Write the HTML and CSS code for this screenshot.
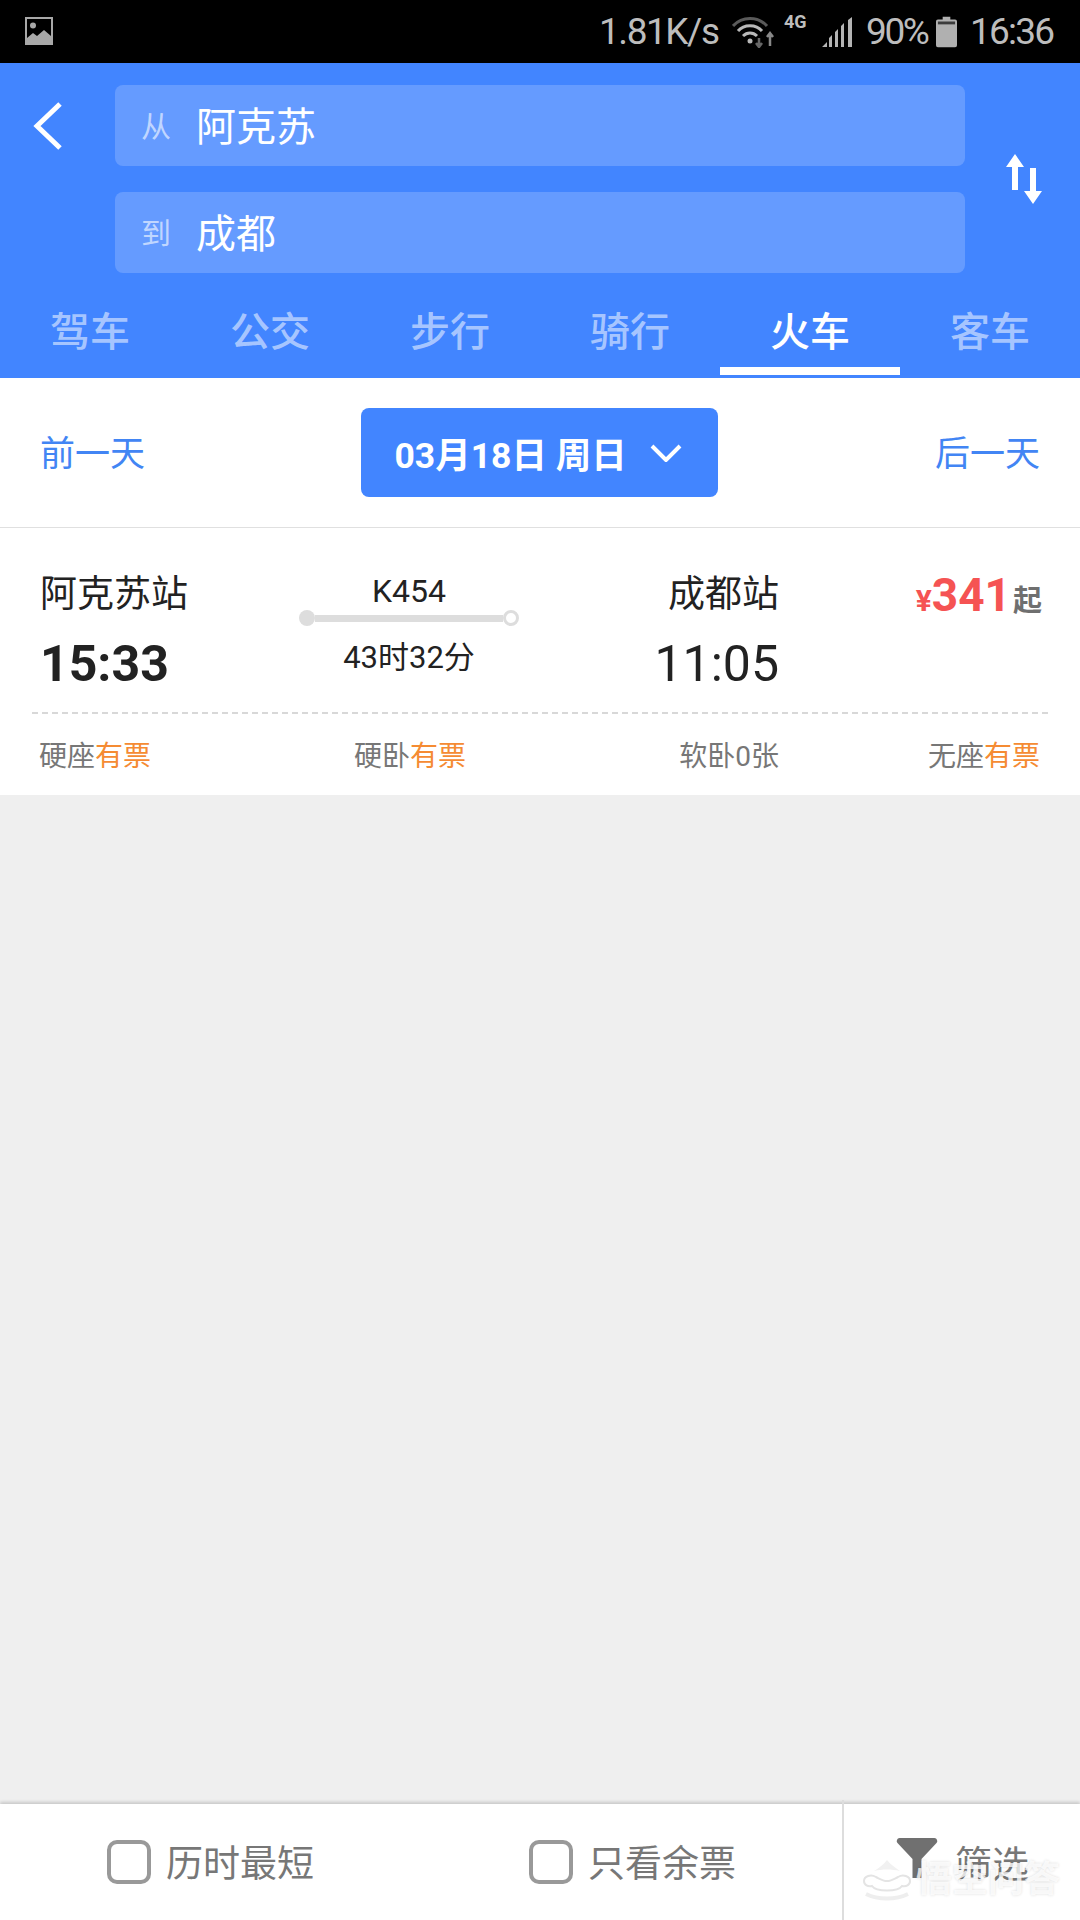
FILE: index.html
```html
<!DOCTYPE html>
<html lang="zh-CN">
<head>
<meta charset="utf-8">
<title>火车</title>
<link rel="stylesheet" href="styles.css">
</head>
<body>
<div class="app">
  <div class="status">
    <svg class="st-img" viewBox="0 0 30 30"><path d="M1 1h28v28H1z" fill="#a8a8a8"/><path d="M3 3h24v17l-7-6-7 6-4-3-6 5z" fill="#000"/><circle cx="9" cy="9.500" r="3" fill="#a8a8a8"/></svg>
    <div class="st-right">
      <span class="st-speed">1.81K/s</span>
      <svg class="st-wifi" viewBox="0 0 44 32" fill="none"><path d="M1 10C10 0 26 0 35 10" stroke="#5a5a5a" stroke-width="3"/><path d="M6 15C12 8 24 8 30 15" stroke="#b8b8b8" stroke-width="3"/><path d="M11 20C15 16 21 16 25 20" stroke="#b8b8b8" stroke-width="3"/><circle cx="18" cy="25" r="2.500" fill="#b8b8b8"/><path d="M27 22v8M24 27l3 4 3-4" stroke="#666" stroke-width="2.500"/><path d="M38 30V18M35 21l3-4 3 4" stroke="#888" stroke-width="2.500"/></svg>
      <span class="st-net">4G</span>
      <svg class="st-signal" viewBox="0 0 31 30"><path d="M0 30l5-5v5zM7 30V21l3-3v12zM13 30V15l3-3v18zM19 30V9l3-3v24zM26 30V3l4-3v30z" fill="#b4b4b4"/></svg>
      <span class="st-batt-text">90%</span>
      <svg class="st-batt" viewBox="0 0 22 32"><path d="M7 0h8v3h5a2 2 0 0 1 2 2v25a2 2 0 0 1-2 2H2a2 2 0 0 1-2-2V5a2 2 0 0 1 2-2h5z" fill="#b0b0b0"/><path d="M2 5h18v3H2z" fill="#3c3c3c"/></svg>
      <span class="st-time">16:36</span>
    </div>
  </div>

  <header class="header">
    <div class="route">
      <div class="back-cell">
        <svg class="back" viewBox="0 0 32 52" fill="none"><path d="M27 3L4 25l23 22" stroke="#fff" stroke-width="5"/></svg>
      </div>
      <div class="fields">
        <div class="field"><span class="field-label">从</span><span class="field-value">阿克苏</span></div>
        <div class="field"><span class="field-label">到</span><span class="field-value">成都</span></div>
      </div>
      <div class="swap-cell">
        <svg class="swap" viewBox="0 0 36 50"><path d="M9 0l9 13h-6v23H6V13H0z" fill="#fff"/><path d="M27 50l-9-13h6V14h6v23h6z" fill="#fff"/></svg>
      </div>
    </div>
    <nav class="tabs">
      <span class="tab">驾车</span>
      <span class="tab">公交</span>
      <span class="tab">步行</span>
      <span class="tab">骑行</span>
      <span class="tab tab-active">火车</span>
      <span class="tab">客车</span>
    </nav>
  </header>

  <section class="date-row">
    <span class="day-link">前一天</span>
    <div class="date-btn"><span>03月18日 周日</span>
      <svg class="date-chev" viewBox="0 0 32 18" fill="none"><path d="M2 2l14 14L30 2" stroke="#fff" stroke-width="4"/></svg>
    </div>
    <span class="day-link">后一天</span>
  </section>

  <section class="card">
    <div class="train">
      <div class="col-from">
        <div class="station">阿克苏站</div>
        <div class="time time-bold">15:33</div>
      </div>
      <div class="col-mid">
        <div class="train-no">K454</div>
        <div class="track"><i class="dot-start"></i><i class="bar"></i><i class="dot-end"></i></div>
        <div class="duration">43时32分</div>
      </div>
      <div class="col-to">
        <div class="station">成都站</div>
        <div class="time">11:05</div>
      </div>
      <div class="col-price">
        <span class="yen">¥</span><span class="price">341</span><span class="qi">起</span>
      </div>
    </div>
    <div class="seats">
      <div class="seat seat-a">硬座<em>有票</em></div>
      <div class="seat seat-b">硬卧<em>有票</em></div>
      <div class="seat seat-c">软卧0张</div>
      <div class="seat seat-d">无座<em>有票</em></div>
    </div>
  </section>

  <main class="empty"></main>

  <footer class="bottom">
    <div class="opt opt-a"><i class="check"></i><span>历时最短</span></div>
    <div class="opt opt-b"><i class="check"></i><span>只看余票</span></div>
    <div class="filter">
      <svg class="funnel" viewBox="0 0 41 40"><path d="M3 0h35a3 3 0 0 1 2 5L25 21v19h-9V21L1 5a3 3 0 0 1 2-5z" fill="#707070"/></svg>
      <span>筛选</span>
    </div>
    <div class="watermark">
      <svg class="wm-logo" viewBox="0 0 54 42"><path d="M27 1c4 5 9 8 13 11-8-2-18-2-26 0 5-3 9-6 13-11z" fill="#f1f1f1"/><path d="M4 22c0-5 7-7 12-4 4 2 7 4 11 4s7-2 11-4c5-3 12-1 12 4 0 4-4 6-8 5-4 6-26 6-30 0-4 1-8-1-8-5z" fill="#fff" stroke="#e4e4e4" stroke-width="2"/><path d="M6 35c12 6 30 6 42 0" stroke="#eeeeee" stroke-width="4" fill="none"/></svg>
      <span class="wm-text">悟空问答</span>
    </div>
  </footer>
</div>
</body>
</html>
```
FILE: styles.css
```css
* { box-sizing: border-box; }
html, body { margin: 0; padding: 0; }
body {
  width: 1080px;
  height: 1920px;
  overflow: hidden;
  font-family: Roboto, "Noto Sans CJK SC", sans-serif;
  color: #222;
  background: #efefef;
}
.app { display: flex; flex-direction: column; height: 1920px; }

/* status bar */
.status {
  height: 63px;
  background: #000;
  display: flex;
  align-items: center;
  justify-content: space-between;
  padding: 0 28px 0 24px;
  color: #bdbdbd;
  flex: none;
}
.st-img { width: 30px; height: 30px; margin-top: -1px; }
.st-right { display: flex; align-items: center; }
.st-speed { font-size: 37px; letter-spacing: -1.450px; line-height: 40px; width: 119px; white-space: nowrap; margin-right: 14px; }
.st-wifi { width: 44px; height: 32px; margin-right: 8px; }
.st-net { font-size: 18px; font-weight: 700; line-height: 20px; width: 25px; margin-top: -20px; margin-right: 13px; }
.st-signal { width: 31px; height: 30px; margin-right: 13px; margin-top: 1px; }
.st-batt-text { font-size: 37px; letter-spacing: -2.400px; line-height: 40px; width: 60px; white-space: nowrap; margin-right: 10px; }
.st-batt { width: 21px; height: 32px; margin-right: 13px; }
.st-time { font-size: 37px; letter-spacing: -1.800px; line-height: 40px; width: 82px; white-space: nowrap; }

/* header */
.header {
  background: #4285ff;
  height: 315px;
  flex: none;
  padding-top: 22px;
  display: flex;
  flex-direction: column;
}
.route { display: flex; height: 188px; }
.back-cell { width: 115px; padding: 16px 0 0 33px; }
.back { width: 32px; height: 52px; display: block; }
.fields { width: 850px; display: flex; flex-direction: column; gap: 26px; }
.field {
  height: 81px;
  background: #659bff;
  border-radius: 8px;
  display: flex;
  align-items: center;
  padding-left: 26px;
}
.field-label { font-size: 30px; color: rgba(255,255,255,.6); width: 55px; line-height: 40px; margin-top: 2px; }
.field-value { font-size: 40px; color: #fff; line-height: 50px; margin-top: 5px; }
.swap-cell { flex: 1; padding: 69px 0 0 41px; }
.swap { width: 36px; height: 50px; display: block; }
.tabs { display: grid; grid-template-columns: repeat(6, 180px); padding-top: 31px; flex: 1; }
.tab {
  position: relative;
  text-align: center;
  font-size: 40px;
  font-weight: 500;
  line-height: 58px;
  color: rgba(255,255,255,.55);
}
.tab-active { color: #fff; }
.tab-active::after {
  content: "";
  position: absolute;
  left: 0;
  right: 0;
  top: 63px;
  height: 8px;
  background: #fff;
}

/* date */
.date-row {
  height: 150px;
  flex: none;
  background: #fff;
  border-bottom: 1px solid #e0e0e0;
  display: flex;
  align-items: center;
  justify-content: space-between;
  padding: 0 40px;
}
.day-link { font-size: 35px; color: #4285f4; line-height: 44px; margin-top: 4px; }
.date-btn {
  width: 357px;
  height: 89px;
  margin-left: -2px;
  background: #4285ff;
  border-radius: 8px;
  color: #fff;
  font-size: 35.5px;
  font-weight: 700;
  display: flex;
  align-items: center;
  padding-left: 34px;
  white-space: nowrap;
}
.date-chev { width: 32px; height: 18px; margin-left: 23px; }

/* card */
.card { background: #fff; height: 267px; flex: none; display: flex; flex-direction: column; }
.train { height: 186px; display: flex; position: relative; margin: 0 32px; border-bottom: 2px dashed #d8d8d8; padding-left: 8px; }
.col-from { width: 259px; padding-top: 42px; }
.station { font-size: 37px; line-height: 50px; }
.time { font-size: 50px; line-height: 60px; margin-top: 14px; }
.time-bold { font-weight: 700; }
.col-mid { width: 220px; padding-top: 43px; display: flex; flex-direction: column; align-items: center; }
.train-no { font-size: 32px; line-height: 40px; }
.track { display: flex; align-items: center; width: 220px; height: 16px; margin-top: -1px; }
.dot-start { width: 16px; height: 16px; border-radius: 50%; background: #ddd; flex: none; }
.bar { flex: 1; height: 7px; background: #ddd; }
.dot-end { width: 16px; height: 16px; border-radius: 50%; background: #fff; border: 3px solid #ddd; flex: none; }
.duration { font-size: 31px; line-height: 40px; margin-top: 12px; }
.col-to { width: 260px; padding-top: 42px; text-align: right; }
.col-price { position: absolute; right: 6px; top: 37px; white-space: nowrap; }
.yen { color: #f55353; font-size: 30px; font-weight: 700; }
.price { color: #f55353; font-size: 46px; font-weight: 700; line-height: 60px; }
.qi { color: #6f6f6f; font-size: 29px; font-weight: 700; margin-left: 2px; }
.seats { position: relative; flex: 1; font-size: 28px; line-height: 40px; color: #777; }
.seats em { font-style: normal; color: #f58b33; }
.seat { position: absolute; top: 23px; white-space: nowrap; }
.seat-a { left: 39px; }
.seat-b { left: 354px; }
.seat-c { right: 301px; }
.seat-d { right: 40px; }

/* empty */
.empty { flex: 1; background: #efefef; }

/* bottom */
.bottom {
  height: 116px;
  flex: none;
  background: #fff;
  position: relative;
  display: flex;
  align-items: center;
  box-shadow: 0 -2px 3px rgba(0,0,0,.16);
  font-size: 37px;
  color: #777;
  line-height: 50px;
}
.opt { display: flex; align-items: center; gap: 15px; }
.opt span { padding-top: 6px; }
.opt-a { margin-left: 107px; width: 422px; }
.opt-b { width: 313px; }
.check { width: 44px; height: 44px; border: 4px solid #999; border-radius: 10px; display: block; flex: none; }
.filter { align-self: stretch; flex: 1; border-left: 2px solid #ddd; display: flex; align-items: center; padding-left: 52px; gap: 17px; margin-top: -4px; }
.filter span { padding-top: 12px; }
.funnel { width: 42px; height: 40px; margin-top: -5px; }
.watermark {
  position: absolute;
  left: 860px;
  top: 54px;
  display: flex;
  align-items: center;
  gap: 2px;
}
.wm-logo { width: 54px; height: 42px; }
.wm-text {
  font-size: 36px;
  line-height: 44px;
  white-space: nowrap;
  color: rgba(255,255,255,.8);
  text-shadow: 0 0 3px rgba(0,0,0,.14);
  font-weight: 700;
}
```
